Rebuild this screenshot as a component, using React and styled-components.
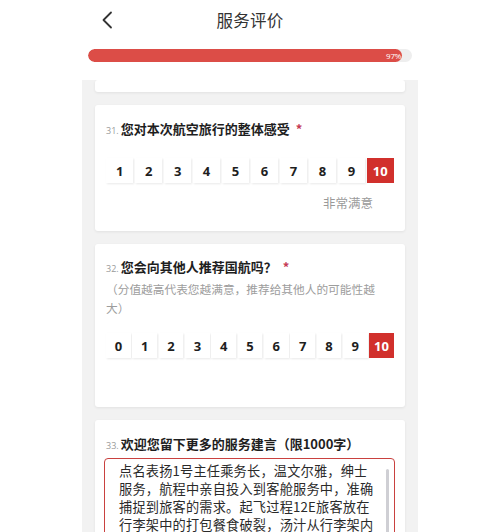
import React from "react";
import styled, { createGlobalStyle } from "styled-components";

const Global = createGlobalStyle`
  html, body { margin: 0; padding: 0; background: #fff; }
  body { font-family: "Open Sans", "Noto Sans CJK SC", sans-serif; color: #222; }
  * { box-sizing: border-box; }
`;

const Page = styled.div`
  width: 500px;
  height: 532px;
  overflow: hidden;
  display: flex;
  flex-direction: column;
  align-items: center;
`;

const Header = styled.div`
  flex-shrink: 0;
  width: 100%;
  height: 40px;
  display: flex;
  align-items: center;
  justify-content: center;
  position: relative;
`;

const BackButton = styled.button`
  position: absolute;
  left: 96px;
  top: 8px;
  width: 22px;
  height: 24px;
  border: 0;
  padding: 0;
  background: none;
  display: flex;
  align-items: center;
  justify-content: center;
`;

const Title = styled.div`
  font-family: "Noto Sans CJK SC", sans-serif;
  font-size: 16.5px;
  color: #333;
  letter-spacing: 0.2px;
`;

const Track = styled.div`
  flex-shrink: 0;
  margin-top: 9px;
  width: 324px;
  height: 13px;
  border-radius: 7px;
  background: #eeeeee;
  overflow: hidden;
  display: flex;
`;

const Fill = styled.div`
  height: 100%;
  background: #dc4d47;
  border-radius: 7px;
  display: flex;
  align-items: center;
  justify-content: flex-end;
  padding-right: 1px;
  font-size: 8px;
  color: #fff;
  letter-spacing: -0.2px;
`;

const Panel = styled.div`
  margin-top: 18px;
  width: 336px;
  flex: 1 1 auto;
  min-height: 0;
  overflow: hidden;
  background: #f2f2f2;
  padding: 0 13px;
  display: flex;
  flex-direction: column;
  gap: 13px;
`;

const Card = styled.div`
  background: #fff;
  border-radius: 3px;
  box-shadow: 0 1px 3px rgba(0, 0, 0, 0.07);
  padding: ${(p) => p.$pad || "15px 11px 20px"};
  height: ${(p) => (p.$h ? p.$h + "px" : "auto")};
  flex-shrink: 0;
`;

const QTitle = styled.div`
  display: flex;
  align-items: baseline;
  line-height: 18px;
  font-family: "Noto Sans CJK SC", sans-serif;
  font-size: 13px;
  font-weight: 700;
  color: #1e1e1e;
`;

const QNum = styled.span`
  font-family: "Open Sans", sans-serif;
  font-size: 9px;
  font-weight: 400;
  color: #9a9a9a;
  margin-right: 2px;
`;

const Star = styled.span`
  color: #c63a55;
  margin-left: 6px;
  font-weight: 700;
`;

const Hint = styled.div`
  font-family: "Noto Sans CJK SC", sans-serif;
  font-size: 11.7px;
  line-height: 19px;
  color: #9d9d9d;
  padding-right: 14px;
  margin-top: 1px;
`;

const Scale = styled.div`
  display: flex;
  gap: 1.5px;
  margin-top: ${(p) => p.$mt}px;
`;

const ScaleBtn = styled.div`
  flex: 1;
  height: 25px;
  display: flex;
  align-items: center;
  justify-content: center;
  font-family: "Open Sans", sans-serif;
  font-size: 13px;
  font-weight: 700;
  background: ${(p) => (p.$on ? "#d1302c" : "#fff")};
  color: ${(p) => (p.$on ? "#fff" : "#1e1e1e")};
  box-shadow: ${(p) =>
    p.$on ? "none" : "1px 1px 2px rgba(0, 0, 0, 0.09)"};
`;

const Legend = styled.div`
  text-align: right;
  padding-right: 21px;
  margin-top: 12px;
  font-family: "Noto Sans CJK SC", sans-serif;
  font-size: 12.5px;
  line-height: 16px;
  color: #9a9a9a;
`;

const TextBox = styled.div`
  position: relative;
  margin-top: 3px;
  margin-left: -2px;
  width: 291px;
  height: 130px;
  border: 1.5px solid #c9413f;
  border-radius: 4px;
  padding: 3px 8px 0 14px;
  font-family: "Noto Sans CJK SC", sans-serif;
  font-size: 13.2px;
  letter-spacing: 0.2px;
  line-height: 18px;
  color: #2a2a2a;
  white-space: pre;
  overflow: hidden;
  text-spacing-trim: space-all;
`;

const ScrollThumb = styled.div`
  position: absolute;
  right: 5px;
  top: 10px;
  width: 3px;
  height: 110px;
  border-radius: 2px;
  background: #cfcfd4;
`;

const Chevron = () => (
  <svg width="12" height="18" viewBox="0 0 12 18" fill="none">
    <polyline
      points="10,1.5 2.5,9 10,16.5"
      stroke="#333"
      strokeWidth="1.8"
      strokeLinecap="round"
      strokeLinejoin="round"
    />
  </svg>
);

const range = (a, b) => Array.from({ length: b - a + 1 }, (_, i) => a + i);

const comment =
  "点名表扬1号主任乘务长，温文尔雅，绅士\n服务，航程中亲自投入到客舱服务中，准确\n捕捉到旅客的需求。起飞过程12E旅客放在\n行李架中的打包餐食破裂，汤汁从行李架内\n流出，";

export default function App() {
  return (
    <>
      <Global />
      <Page>
        <Header>
          <BackButton aria-label="返回">
            <Chevron />
          </BackButton>
          <Title>服务评价</Title>
        </Header>
        <Track>
          <Fill style={{ width: "97%" }}>97%</Fill>
        </Track>
        <Panel>
          <Card $h={12} $pad="0" />
          <Card>
            <QTitle>
              <QNum>31.</QNum>
              您对本次航空旅行的整体感受
              <Star>*</Star>
            </QTitle>
            <Scale $mt={18}>
              {range(1, 10).map((n) => (
                <ScaleBtn key={n} $on={n === 10}>
                  {n}
                </ScaleBtn>
              ))}
            </Scale>
            <Legend>非常满意</Legend>
          </Card>
          <Card $pad="14px 11px 49px">
            <QTitle>
              <QNum>32.</QNum>
              您会向其他人推荐国航吗？
              <Star>*</Star>
            </QTitle>
            <Hint>（分值越高代表您越满意，推荐给其他人的可能性越大）</Hint>
            <Scale $mt={16}>
              {range(0, 10).map((n) => (
                <ScaleBtn key={n} $on={n === 10}>
                  {n}
                </ScaleBtn>
              ))}
            </Scale>
          </Card>
          <Card $pad="15px 11px 20px">
            <QTitle>
              <QNum>33.</QNum>
              欢迎您留下更多的服务建言（限1000字）
            </QTitle>
            <TextBox>
              {comment}
              <ScrollThumb />
            </TextBox>
          </Card>
        </Panel>
      </Page>
    </>
  );
}
